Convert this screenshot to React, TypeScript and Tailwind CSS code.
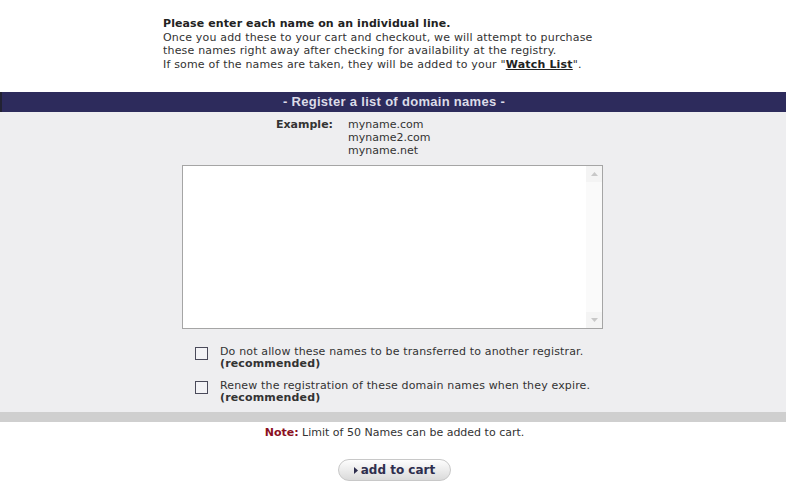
import React from 'react'

const verdana = { fontFamily: '"DejaVu Sans", Verdana, sans-serif' }

function ScrollArrow({ up }: { up: boolean }) {
  return (
    <div className="h-[16px] w-full flex items-center justify-center bg-[#f4f4f4]">
      <svg width="7" height="4" viewBox="0 0 7 4">
        <path d={up ? 'M0 4 L3.5 0 L7 4 Z' : 'M0 0 L3.5 4 L7 0 Z'} fill="#c8c8c8" />
      </svg>
    </div>
  )
}

function Option({ text }: { text: string }) {
  return (
    <label className="flex items-start gap-[12px]">
      <span className="mt-[1px] w-[13px] h-[13px] border border-[#4a4a5a] bg-[#f3f3f6] shrink-0" />
      <span className="text-[11px] leading-[12px] text-[#333] tracking-[0.15px]">
        {text}
        <br />
        <b className="text-[#333]">(recommended)</b>
      </span>
    </label>
  )
}

export default function App() {
  return (
    <div className="w-[789px] h-[491px] bg-white text-[#222]" style={verdana}>
      {/* intro */}
      <div className="pl-[163px] pt-[17px] text-[11px] leading-[13.5px] text-[#333] tracking-[0.18px]">
        <p className="font-bold text-[#222] tracking-[0.1px]">Please enter each name on an individual line.</p>
        <p>Once you add these to your cart and checkout, we will attempt to purchase</p>
        <p>these names right away after checking for availability at the registry.</p>
        <p>
          If some of the names are taken, they will be added to your "
          <a className="font-bold underline text-[#222]">Watch List</a>".
        </p>
      </div>

      {/* header bar */}
      <div className="mt-[21px] mr-[3px] h-[20px] bg-[#2d2b5c] border-l-2 border-[#222233] flex items-center justify-center">
        <span className="text-[13px] font-bold text-[#dcdce8] tracking-[0.3px]" style={{ fontFamily: '"Liberation Sans", Arial, sans-serif' }}>
          - Register a list of domain names -
        </span>
      </div>

      {/* panel */}
      <div className="mr-[3px] bg-[#eeeef0] pt-[6px] pb-[8px]">
        <div className="ml-[276px] flex gap-[15px] text-[11px] leading-[13px]">
          <span className="font-bold text-[#333]">Example:</span>
          <div className="text-[#333]">
            <p>myname.com</p>
            <p>myname2.com</p>
            <p>myname.net</p>
          </div>
        </div>

        <div className="ml-[182px] mt-[8px] w-[421px] h-[164px] border border-[#a5a5a5] bg-white flex">
          <div className="flex-1" />
          <div className="w-[16px] h-full bg-[#fafafa] flex flex-col justify-between">
            <ScrollArrow up />
            <ScrollArrow up={false} />
          </div>
        </div>

        <div className="ml-[195px] mt-[17px] flex flex-col gap-[10px]">
          <Option text="Do not allow these names to be transferred to another registrar." />
          <Option text="Renew the registration of these domain names when they expire." />
        </div>
      </div>
      <div className="mr-[3px] h-[10px] bg-[#cfcfcf]" />

      {/* note */}
      <p className="mt-[4px] text-center text-[11px] leading-[14px] text-[#333]">
        <b className="text-[#8b1022]">Note:</b> Limit of 50 Names can be added to cart.
      </p>

      <div className="mt-[19px] flex justify-center">
        <button className="w-[113px] h-[22px] rounded-full border border-[#c8c8c8] bg-gradient-to-b from-[#fdfdfd] via-[#ececec] to-[#dadada] flex items-center justify-center gap-[3px] text-[12px] font-bold text-[#2e2e4e]" style={{ fontFamily: '"DejaVu Sans", sans-serif' }}>
          <svg width="4" height="7" viewBox="0 0 4 7">
            <path d="M0 0 L4 3.5 L0 7 Z" fill="#2e2e4e" />
          </svg>
          <span className="leading-none">add to cart</span>
        </button>
      </div>
    </div>
  )
}
